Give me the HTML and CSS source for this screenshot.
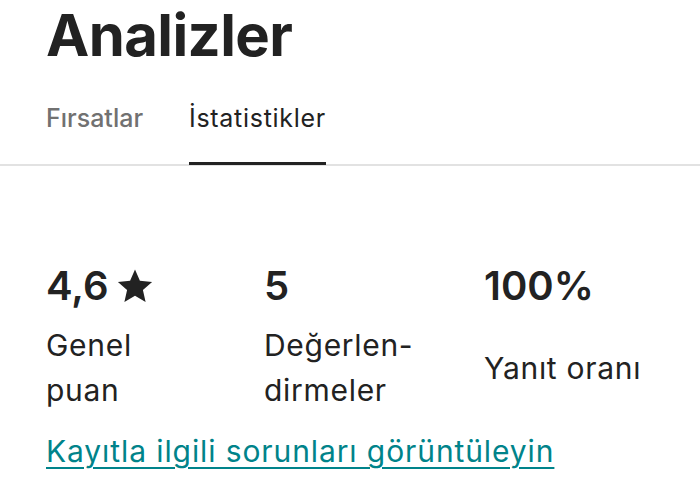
FILE: index.html
```html
<!DOCTYPE html>
<html lang="tr">
<head>
<meta charset="utf-8">
<link rel="stylesheet" href="styles.css">
</head>
<body>
<div class="page">
  <h1 class="title">Analizler</h1>
  <nav class="tabs">
    <div class="tab">Fırsatlar</div>
    <div class="tab active">İstatistikler</div>
  </nav>
  <section class="stats">
    <div class="value">4,6<svg class="star" viewBox="0 0 24 24"><path d="M12 1.6l3.1 7.1 7.7.7-5.8 5.1 1.7 7.6L12 18.1l-6.7 4 1.7-7.6L1.2 9.4l7.7-.7z"/></svg></div>
    <div class="value">5</div>
    <div class="value">100%</div>
    <div class="label">Genel<br>puan</div>
    <div class="label">Değerlen-<br>dirmeler</div>
    <div class="label">Yanıt oranı</div>
  </section>
  <a class="link" href="#">Kayıtla ilgili sorunları görüntüleyin</a>
</div>
</body>
</html>
```
FILE: styles.css
```css
html, body {
  margin: 0;
  padding: 0;
  background: #ffffff;
}
body {
  font-family: "Inter", "Noto Sans", sans-serif;
  color: #222222;
  width: 700px;
  height: 500px;
  overflow: hidden;
}
.page {
  display: flex;
  flex-direction: column;
}
.title {
  margin: 0;
  padding: 0 0 0 46px;
  font-size: 58px;
  font-weight: 700;
  line-height: 70px;
  letter-spacing: -0.6px;
}
.tabs {
  display: flex;
  gap: 46px;
  padding-left: 46px;
  margin-top: 35px;
  border-bottom: 2px solid #e2e2e2;
}
.tab {
  font-size: 25px;
  font-weight: 500;
  color: #717171;
  padding-bottom: 31px;
  line-height: 26px;
  border-bottom: 3px solid transparent;
  margin-bottom: -1px;
}
.tab.active {
  color: #222222;
  font-weight: 400;
  letter-spacing: 0.7px;
  border-bottom-color: #222222;
}
.stats {
  display: grid;
  grid-template-columns: 218px 220px 200px;
  align-items: center;
  padding-left: 46px;
  margin-top: 96px;
}
.value {
  font-size: 40px;
  font-weight: 600;
  line-height: 48px;
  display: flex;
  align-items: center;
  gap: 7px;
  align-self: start;
}
.star {
  width: 38px;
  height: 38px;
  fill: #222222;
}
.label {
  font-size: 30px;
  line-height: 45px;
  letter-spacing: 0.7px;
  margin-top: 13px;
}
.link {
  margin: 20px 0 0 46px;
  font-size: 30px;
  letter-spacing: 0.9px;
  color: #00838a;
  text-decoration: underline;
  text-underline-offset: 5px;
  text-decoration-thickness: 2px;
  align-self: flex-start;
}
```
